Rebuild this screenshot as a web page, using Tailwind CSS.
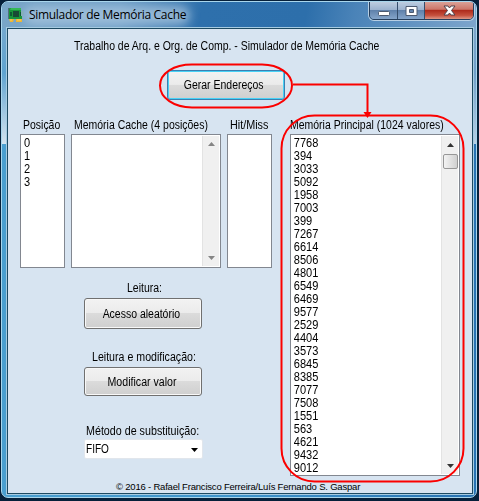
<!DOCTYPE html>
<html lang="pt-BR">
<head>
<meta charset="utf-8">
<title>Simulador de Memória Cache</title>
<script src="https://cdn.jsdelivr.net/npm/@tailwindcss/browser@4"></script>
</head>
<body class="w-[479px] h-[501px] overflow-hidden bg-[#06203a] text-black text-[12px] leading-[13px] whitespace-nowrap font-['Liberation_Sans',Arial,sans-serif]">
<div class="relative w-[479px] h-[501px] pt-px pl-px pr-[2px] pb-[3px]">
  <div class="relative h-[497px] rounded-[7px] border border-[#a9d6ec] bg-gradient-to-r from-[#4a9fd0] via-[#3e94cc] to-[#2872b2] overflow-hidden flex flex-col">
    <div class="absolute left-0 top-0 w-[5px] h-[142px] bg-gradient-to-b from-[#7fabcd] via-[#5fa3d0] to-[#d3e3ee]"></div>
    <div class="absolute right-0 top-0 w-[5px] h-[142px] bg-gradient-to-b from-[#86aacd] via-[#6f9fc9] to-[#b8cfe4]"></div>
    <header class="relative h-[26px] shrink-0 flex items-center pl-[6px] bg-[linear-gradient(100deg,#79a6c8_0%,#6f9fc8_25%,#2e70ac_42%,#2d6fab_64%,#4a83b8_74%,#7da5cc_100%)]">
      <div class="absolute left-[22px] top-[4px] w-[166px] h-[19px] rounded-full bg-[#a9c5dd]/75 blur-[5px]"></div>
      <svg class="relative w-[16px] h-[16px] mt-[-1px]" viewBox="0 0 16 16">
        <path d="M0 1h2v11H0z" fill="#52707c"/>
        <path d="M1 2.500Q1 1 2.500 1H13v3h1v8H1z" fill="#17963b"/>
        <path d="M3 1h10v2H2z" fill="#34b855"/>
        <path d="M5 4h6v6H5z" fill="#184b35"/>
        <path d="M2 5h2v4H2zM12 5h1v4h-1z" fill="#0c5c33"/>
        <path d="M13 4h2l1 2-1 3h-2z" fill="#86aebb"/>
        <path d="M1 12h5l-1 3H2zM8 12h6v3H8z" fill="#edb634"/>
        <path d="M3 12v2M10 12v2M12 12v2" stroke="#fbdc78" stroke-width=".7"/>
      </svg>
      <span class="relative ml-[5px] text-[12px] leading-[16px] tracking-[-0.31px] font-['Open_Sans','Noto_Sans',sans-serif]">Simulador de Memória Cache</span>
      <div class="absolute left-[367px] top-[-2px] flex w-[105px] h-[20px] rounded-b-[5px] border border-[#253e5c] overflow-hidden shadow-[0_0_0_1px_#b7cfe4]">
        <div class="w-[28px] border-r border-[#344d6c] bg-[linear-gradient(#c1d0e2_0%,#9cb3cf_48%,#5f81ab_52%,#85a5ca_100%)]">
          <svg class="w-[28px] h-[18px]" viewBox="0 0 28 18"><rect x="8.500" y="10.500" width="11" height="4" rx="1" fill="#fff" stroke="#4c5a70"/></svg>
        </div>
        <div class="w-[27px] border-r border-[#344d6c] bg-[linear-gradient(#c1d0e2_0%,#9cb3cf_48%,#5f81ab_52%,#85a5ca_100%)]">
          <svg class="w-[27px] h-[18px]" viewBox="0 0 27 18"><path d="M8 5.500h11v9H8z M11.500 8.500v3h4v-3z" fill="#fff" fill-rule="evenodd" stroke="#4c5a70"/></svg>
        </div>
        <div class="w-[48px] bg-[linear-gradient(#dda79d_0%,#cd7669_46%,#ae2b1c_52%,#c6513e_80%,#dd9787_100%)]">
          <svg class="w-[48px] h-[18px]" viewBox="0 0 48 18"><path d="M19 5h4l1.500 2L26 5h4l-3.500 4.500L30 14h-4l-1.500-2L23 14h-4l3.500-4.500z" fill="#fff" stroke="#51434c"/></svg>
        </div>
      </div>
    </header>

    <main class="relative ml-[5px] w-[466px] h-[466px] shrink-0 border border-[#1d4a62] bg-[#d7e4f1] shadow-[0_0_0_1px_#a6cbe1]">
      <p class="pt-[11px] pl-[66px] h-[40px]"><span class="inline-block origin-left scale-x-[.873]">Trabalho de Arq. e Org. de Comp. - Simulador de Memória Cache</span></p>
      <div class="flex">
        <section class="w-[264px] shrink-0">
          <div class="h-[50px] flex pl-[159px]">
            <button class="w-[118px] h-[30px] shrink-0 mt-px rounded-[3px] border border-[#3c7fb1] bg-[linear-gradient(#f2f2f2_0%,#ebebeb_48%,#dbdbdb_50%,#cfcfcf_100%)] shadow-[inset_0_0_0_1px_#48d1f5]"><span class="inline-block scale-x-[.873] relative left-[-2px]">Gerar Endereços</span></button>
          </div>
          <div class="flex pl-[12px] gap-[6px]">
            <div class="w-[45px]">
              <h2 class="h-[15px] pl-[3px]"><span class="inline-block origin-left scale-x-[.873]">Posição</span></h2>
              <ul class="w-[45px] h-[134px] border border-[#828790] bg-white pl-[3px] pt-[2px]"><li class="origin-left scale-x-[.92]">0</li><li class="origin-left scale-x-[.92]">1</li><li class="origin-left scale-x-[.92]">2</li><li class="origin-left scale-x-[.92]">3</li></ul>
            </div>
            <div class="w-[150px]">
              <h2 class="h-[15px] pl-[3px]"><span class="inline-block origin-left scale-x-[.873]">Memória Cache (4 posições)</span></h2>
              <div class="w-[150px] h-[134px] border border-[#828790] bg-white flex justify-end p-px">
                <div class="w-[17px] bg-[#f0f0f0] border-l border-[#e3e3e3] flex flex-col justify-between items-center py-[6px]">
                  <svg class="w-[7px] h-[4px]" viewBox="0 0 7 4"><path d="M0 4L3.500 0L7 4z" fill="#858585"/></svg>
                  <svg class="w-[7px] h-[4px]" viewBox="0 0 7 4"><path d="M0 0L3.500 4L7 0z" fill="#858585"/></svg>
                </div>
              </div>
            </div>
            <div class="w-[45px]">
              <h2 class="h-[15px] pl-[3px]"><span class="inline-block origin-left scale-x-[.9]">Hit/Miss</span></h2>
              <div class="w-[45px] h-[134px] border border-[#828790] bg-white"></div>
            </div>
          </div>
          <div class="ml-[76px] mt-[14px] w-[118px] flex flex-col">
            <p class="h-[16px] pl-[43px]"><span class="inline-block origin-left scale-x-[.873]">Leitura:</span></p>
            <button class="h-[31px] rounded-[3px] border border-[#707070] bg-[linear-gradient(#f2f2f2_0%,#ebebeb_48%,#dbdbdb_50%,#cfcfcf_100%)] shadow-[inset_0_0_0_1px_#f8f8f8]"><span class="inline-block relative top-px left-[-1.5px] scale-x-[.873]">Acesso aleatório</span></button>
            <p class="mt-[22px] h-[16px] pl-[8px]"><span class="inline-block origin-left scale-x-[.885]">Leitura e modificação:</span></p>
            <button class="h-[29px] rounded-[3px] border border-[#707070] bg-[linear-gradient(#f2f2f2_0%,#ebebeb_48%,#dbdbdb_50%,#cfcfcf_100%)] shadow-[inset_0_0_0_1px_#f8f8f8]"><span class="inline-block relative top-px left-[-1px] scale-x-[.885]">Modificar valor</span></button>
            <p class="mt-[28px] h-[15px] pl-[2px]"><span class="inline-block relative top-px origin-left scale-x-[.893]">Método de substituição:</span></p>
            <div class="w-[119px] h-[20px] border border-[#e1e6ec] bg-white rounded-[2px] flex items-center justify-between pl-px pr-[4px]">
              <span class="inline-block origin-left scale-x-[.84]">FIFO</span>
              <svg class="w-[7px] h-[4px] mt-px" viewBox="0 0 7 4"><path d="M0 0h7L3.500 4z"/></svg>
            </div>
          </div>
        </section>
        <section class="pl-[18px] pt-[50px]">
          <h2 class="h-[15px]"><span class="inline-block origin-left scale-x-[.873]">Memória Principal (1024 valores)</span></h2>
          <div class="w-[170px] h-[342px] border border-[#828790] bg-white flex justify-between p-px">
            <ul class="pl-[2px] pt-px origin-left scale-x-[.92]">
              <li>7768</li><li>394</li><li>3033</li><li>5092</li><li>1958</li><li>7003</li><li>399</li><li>7267</li><li>6614</li><li>8506</li><li>4801</li><li>6549</li><li>6469</li><li>9577</li><li>2529</li><li>4404</li><li>3573</li><li>6845</li><li>8385</li><li>7077</li><li>7508</li><li>1551</li><li>563</li><li>4621</li><li>9432</li><li>9012</li>
            </ul>
            <div class="w-[17px] bg-[#f0f0f0] border-l border-[#e3e3e3] flex flex-col items-center pt-[7px] pb-[6px]">
              <svg class="w-[7px] h-[4px]" viewBox="0 0 7 4"><path d="M0 4L3.500 0L7 4z" fill="#333"/></svg>
              <div class="mt-[7px] w-[15px] h-[15px] rounded-[2px] border border-[#979797] bg-gradient-to-r from-[#f3f3f3] to-[#d0d0d0]"></div>
              <svg class="mt-auto w-[7px] h-[4px]" viewBox="0 0 7 4"><path d="M0 0L3.500 4L7 0z" fill="#333"/></svg>
            </div>
          </div>
        </section>
      </div>
      <footer class="absolute left-[108px] bottom-0 text-[9.5px] leading-[13px] tracking-[-0.2px]">© 2016 - Rafael Francisco Ferreira/Luís Fernando S. Gaspar</footer>
    </main>
  </div>
  <svg class="absolute left-0 top-0 w-[479px] h-[501px] pointer-events-none" viewBox="0 0 479 501" fill="none" stroke="#fb0000" stroke-width="2">
    <path d="M192 64.500H262C279 64.500 292 74 292 85.500S279 107.500 262 107.500H192C174 107.500 160 98 160 85.500S174 64.500 192 64.500Z"/>
    <path d="M293 84.500H367.500V113"/>
    <path d="M363.500 112h8l-4 6z" fill="#fb0000" stroke="none"/>
    <rect x="281.500" y="115.500" width="182" height="366" rx="33" ry="33"/>
  </svg>
</div>
</body>
</html>
